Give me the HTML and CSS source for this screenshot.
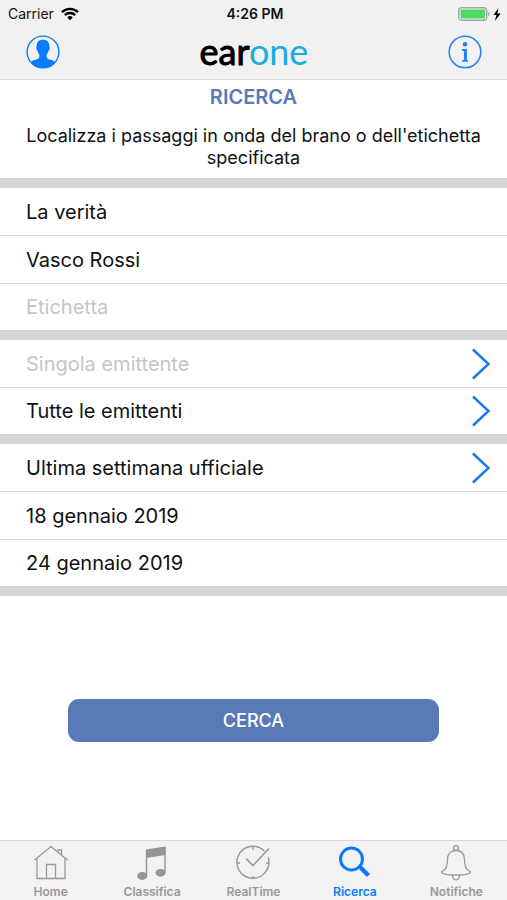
FILE: index.html
```html
<!DOCTYPE html>
<html lang="it">
<head>
<meta charset="utf-8">
<meta name="viewport" content="width=device-width, initial-scale=1">
<title>EarOne - Ricerca</title>
<link rel="stylesheet" href="styles.css">
</head>
<body>
<header class="top">
  <div class="status">
    <div class="carrier">
      <span>Carrier</span>
      <svg width="18" height="14" viewBox="0 0 18 14" fill="none" stroke="#000" stroke-width="2.4" aria-hidden="true">
        <path d="M1 5.2a11.4 11.4 0 0 1 16 0M3.8 8.2a7.4 7.4 0 0 1 10.4 0"/>
        <path d="M9 13.2 6.3 10.400a3.900 3.900 0 0 1 5.400 0z" fill="#000" stroke="none"/>
      </svg>
    </div>
    <span class="clock">4:26 PM</span>
    <div class="power">
      <svg width="44" height="16" viewBox="0 0 44 16" aria-hidden="true">
        <rect x="0.700" y="1.700" width="28" height="12.600" rx="3.200" fill="#f1f1f1" stroke="#a5a5a5" stroke-width="1.400"/>
        <rect x="2.500" y="3.500" width="24.500" height="9" rx="1" fill="#4cd964"/>
        <path d="M30.300 5.500c2 .8 2 4.200 0 5z" fill="#a5a5a5"/>
        <path d="M40.500 2 35.500 9h3l-1.700 6 5.900-7.500h-3.400z" fill="#000"/>
      </svg>
    </div>
  </div>
  <div class="nav">
    <button class="icon-button" type="button" aria-label="Profilo">
      <svg width="34" height="34" viewBox="0 0 34 34" aria-hidden="true">
        <circle cx="17" cy="17" r="15.900" fill="none" stroke="#087cff" stroke-width="1.400"/>
        <path d="M17 4.800c-4.500 0-6.500 2.700-6.300 6.600-.8.500-.4 3.300.7 4 .3 1.800 1 3 1.900 4v2.900c-.4 2.600-6.200 2.200-8.500 4.900A16 16 0 0 0 17 33a16 16 0 0 0 12.200-5.800c-2.300-2.700-8.100-2.300-8.500-4.900v-2.900c.9-1 1.600-2.200 1.900-4 1.100-.7 1.500-3.500.7-4 .2-3.900-1.800-6.600-6.300-6.600z" fill="#087cff"/>
      </svg>
    </button>
    <span class="logo"><span class="logo-ear">ear</span><span class="logo-one">one</span></span>
    <button class="icon-button" type="button" aria-label="Informazioni">
      <svg width="34" height="34" viewBox="0 0 34 34" aria-hidden="true">
        <circle cx="17" cy="17" r="15.800" fill="none" stroke="#2b87f5" stroke-width="1.600"/>
        <circle cx="17" cy="9.300" r="2.200" fill="#1f7ff0"/>
        <path d="M14 14.800h4v10.700M14 26h6" fill="none" stroke="#1f7ff0" stroke-width="1.700"/>
        <path d="M17.200 14v12" stroke="#1f7ff0" stroke-width="2.600"/>
      </svg>
    </button>
  </div>
</header>

<main class="page">
  <div class="intro">
    <h1>RICERCA</h1>
    <p>Localizza i passaggi in onda del brano o dell'etichetta specificata</p>
  </div>
  <form class="search">
    <div class="group">
      <input class="row" type="text" aria-label="Titolo" value="La verità">
      <input class="row" type="text" aria-label="Artista" value="Vasco Rossi">
      <input class="row" type="text" aria-label="Etichetta" placeholder="Etichetta">
    </div>
    <div class="group">
      <button class="row muted" type="button">Singola emittente
        <svg class="chevron" width="20" height="32" viewBox="0 0 20 32" aria-hidden="true"><path d="M2 1.500 17.500 16 2 30.500"/></svg>
      </button>
      <button class="row" type="button">Tutte le emittenti
        <svg class="chevron" width="20" height="32" viewBox="0 0 20 32" aria-hidden="true"><path d="M2 1.500 17.500 16 2 30.500"/></svg>
      </button>
    </div>
    <div class="group">
      <button class="row" type="button">Ultima settimana ufficiale
        <svg class="chevron" width="20" height="32" viewBox="0 0 20 32" aria-hidden="true"><path d="M2 1.500 17.500 16 2 30.500"/></svg>
      </button>
      <input class="row" type="text" aria-label="Data iniziale" value="18 gennaio 2019">
      <input class="row" type="text" aria-label="Data finale" value="24 gennaio 2019">
    </div>
    <div class="actions">
      <button class="submit" type="submit">CERCA</button>
    </div>
  </form>
</main>

<nav class="tabs">
  <a class="tab" href="#home">
    <svg width="36" height="36" viewBox="0 0 36 36" fill="none" stroke="#999" stroke-width="1.300" aria-hidden="true">
      <path d="M1.500 15 18 1.500 34.500 15M4 13v20.500h28V13M13.500 33.500v-14h9v14M25 7V5h3.500v5"/>
    </svg>
    <span>Home</span>
  </a>
  <a class="tab" href="#classifica">
    <svg width="36" height="36" viewBox="0 0 36 36" fill="#949494" aria-hidden="true">
      <path d="M12 4.500 31.500 1.500v8.500L12 13z"/>
      <path d="M12.500 5v26M31 2v25.500" stroke="#949494" stroke-width="1.400"/>
      <ellipse cx="8.200" cy="31" rx="5" ry="3.900"/>
      <ellipse cx="26.500" cy="27.800" rx="5" ry="3.900"/>
    </svg>
    <span>Classifica</span>
  </a>
  <a class="tab" href="#realtime">
    <svg width="36" height="36" viewBox="0 0 36 36" fill="none" stroke="#999" aria-hidden="true">
      <path d="M29.500 6.200A16 16 0 1 0 33.200 12.500" stroke-width="1.400"/>
      <path d="M18 2v3M18 31v3M2 18h3M31 18h3" stroke-width="1.300"/>
      <path d="M11 13.500 18 20.500 34 3.500" stroke-width="1.600"/>
    </svg>
    <span>RealTime</span>
  </a>
  <a class="tab active" href="#ricerca" aria-current="page">
    <svg width="36" height="36" viewBox="0 0 36 36" fill="none" stroke="#087cff" aria-hidden="true">
      <circle cx="14.500" cy="14" r="11" stroke-width="3"/>
      <path d="m22.500 21.500 3 2.500" stroke-width="3"/>
      <path d="m24 23 7.500 7.500" stroke-width="4.400"/>
    </svg>
    <span>Ricerca</span>
  </a>
  <a class="tab" href="#notifiche">
    <svg width="36" height="36" viewBox="0 0 36 36" fill="none" stroke="#999" stroke-width="1.300" aria-hidden="true">
      <circle cx="18" cy="3" r="2.400"/>
      <path d="M18 5.500c-5.500 0-8.500 3.500-8.500 9 0 7.500-1.500 10-6 12.500 0 1.700 5 3 14.500 3s14.500-1.300 14.500-3c-4.500-2.500-6-5-6-12.500 0-5.500-3-9-8.500-9z"/>
      <path d="M14.500 30c-.5 6.500 7.500 6.500 7 0"/>
    </svg>
    <span>Notifiche</span>
  </a>
</nav>
</body>
</html>
```
FILE: styles.css
```css
* {
  box-sizing: border-box;
}

body {
  margin: 0;
  min-height: 100vh;
  display: flex;
  flex-direction: column;
  background: #fff;
  color: #111;
  font-family: Inter, Roboto, sans-serif;
}

button,
input {
  margin: 0;
  font: inherit;
  color: inherit;
}

.top {
  background: #f1f1f1;
  border-bottom: 1px solid #dcdcdc;
}

.status {
  display: grid;
  grid-template-columns: 1fr auto 1fr;
  align-items: center;
  height: 27px;
  padding: 0 5px 0 8px;
  font-size: 14px;
}

.carrier {
  display: flex;
  align-items: center;
  gap: 7px;
}

.clock {
  font-weight: 600;
}

.power {
  display: flex;
  justify-content: flex-end;
}

.nav {
  display: flex;
  align-items: center;
  justify-content: space-between;
  height: 52px;
  padding: 0 25px 2px 26px;
}

.icon-button {
  display: flex;
  padding: 0;
  border: 0;
  background: none;
}

.logo {
  padding-bottom: 2px;
  font-family: Lato, sans-serif;
  font-size: 36px;
  line-height: 46px;
}

.logo-ear {
  color: #000;
  -webkit-text-stroke: 1px #000;
}

.logo-one {
  color: #1badde;
}

.page {
  flex: 1;
}

.intro {
  padding: 4px 24px 9px;
  text-align: center;
}

h1 {
  margin: 0 0 15px;
  font-size: 20px;
  line-height: 26px;
  font-weight: 600;
  color: #587bb8;
}

.intro p {
  margin: 0;
  font-size: 18px;
  line-height: 22px;
}

.group {
  border-top: 10px solid #d4d4d4;
}

.row {
  display: flex;
  align-items: center;
  justify-content: space-between;
  width: 100%;
  height: 48px;
  padding: 0 16px 0 26px;
  border: 0;
  border-bottom: 1px solid #dcdcdc;
  border-radius: 0;
  background: #fff;
  font-size: 20px;
  text-align: left;
}

.row:last-child {
  height: 46px;
  border-bottom: 0;
}

.row::placeholder,
.muted {
  color: #c5c5c9;
}

.chevron {
  fill: none;
  stroke: #1877ef;
  stroke-width: 2.4;
}

.actions {
  border-top: 10px solid #d4d4d4;
  padding: 103px 68px 24px;
}

.submit {
  display: block;
  width: 100%;
  height: 43px;
  border: 0;
  border-radius: 11px;
  background: #587bb8;
  color: #fff;
  font-size: 18px;
  font-weight: 500;
}

.tabs {
  display: grid;
  grid-template-columns: repeat(5, 1fr);
  height: 60px;
  border-top: 1px solid #d8d8d8;
  background: #f2f2f2;
}

.tab {
  display: flex;
  flex-direction: column;
  align-items: center;
  gap: 4px;
  padding-top: 4px;
  color: #999;
  font-size: 12px;
  line-height: 14px;
  font-weight: 600;
  text-decoration: none;
}

.active {
  color: #087cff;
}
```
